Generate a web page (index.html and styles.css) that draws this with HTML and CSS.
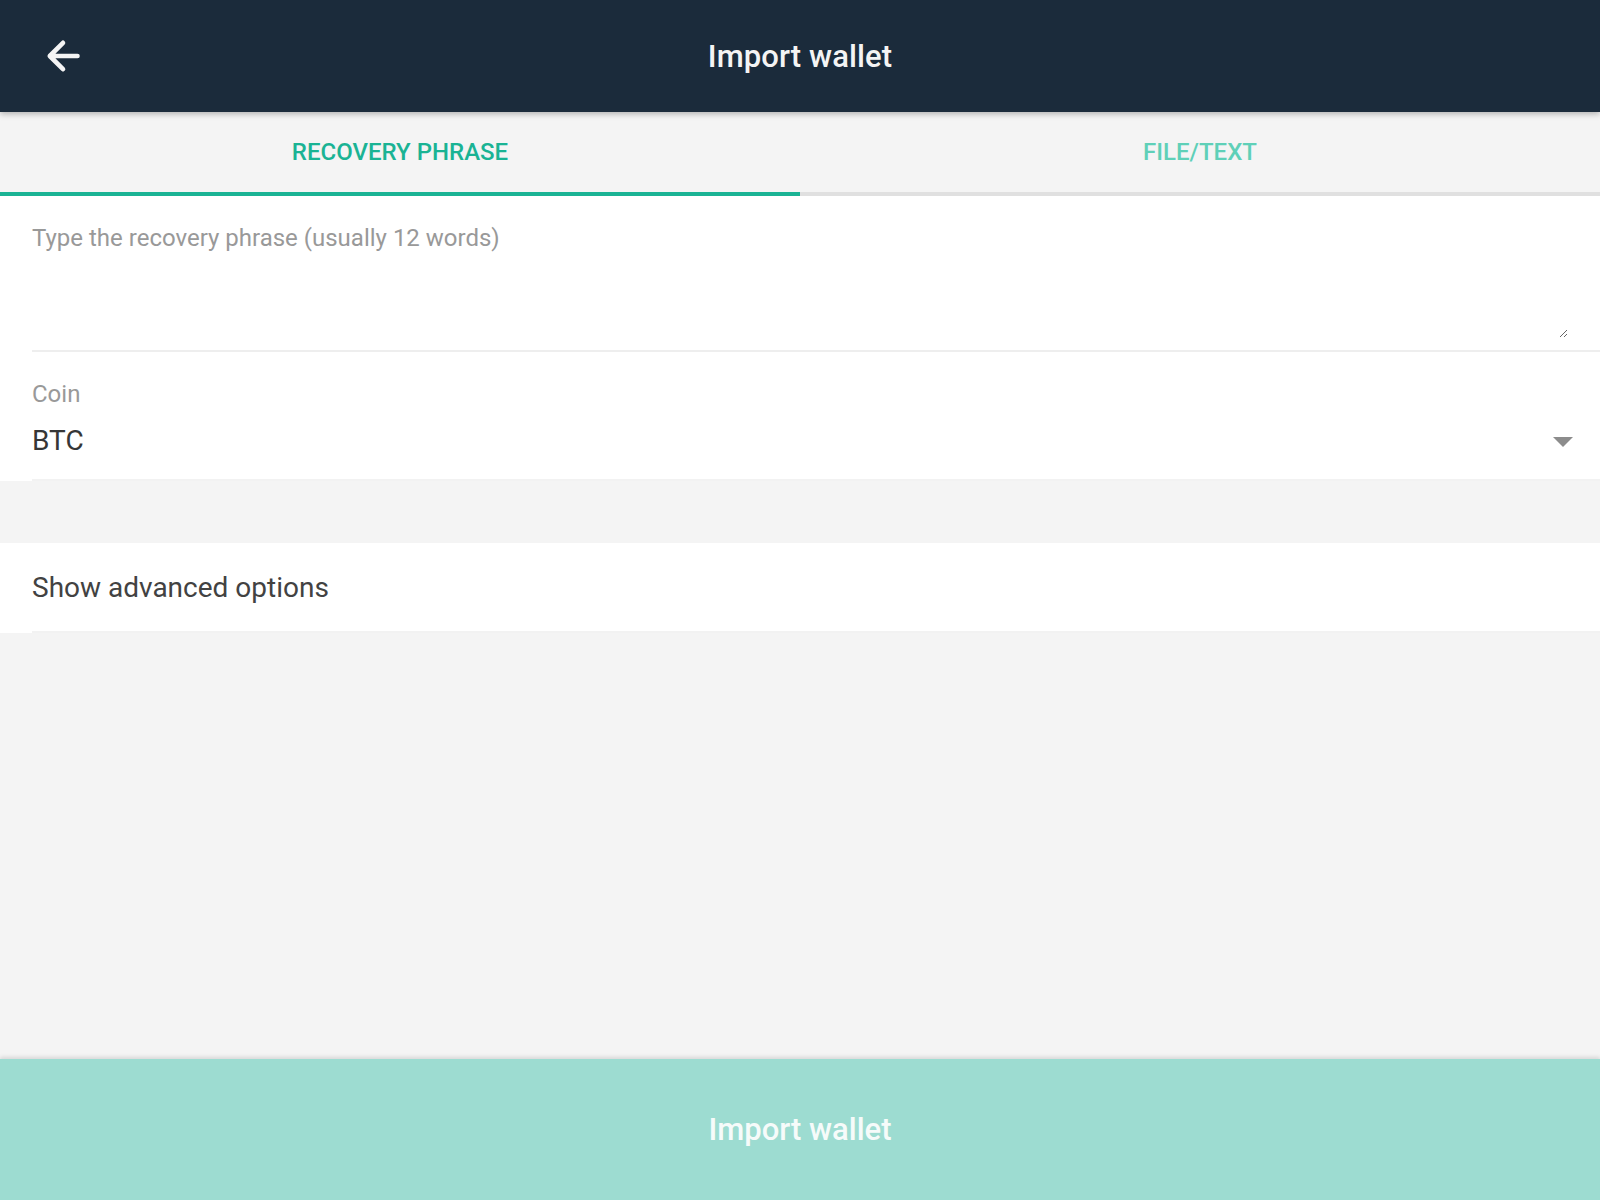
FILE: index.html
```html
<!DOCTYPE html>
<html lang="en">
<head>
<meta charset="utf-8">
<title>Import wallet</title>
<link rel="stylesheet" href="styles.css">
</head>
<body>
<div class="app">
  <header class="topbar">
    <div class="topbar-left">
      <button class="back" aria-label="Back">
        <svg width="40" height="40" viewBox="0 0 40 40" fill="none" stroke="#f4f4f4" stroke-width="4.6" stroke-linecap="round" stroke-linejoin="round"><path d="M33.5 20 H5.8 M19 6.8 L5.8 20 L19 33.2"/></svg>
      </button>
    </div>
    <h1 class="title">Import wallet</h1>
    <div class="topbar-right"></div>
  </header>

  <nav class="tabs">
    <div class="tab tab-active">RECOVERY PHRASE</div>
    <div class="tab">FILE/TEXT</div>
  </nav>

  <section class="form">
    <div class="field field-phrase">
      <textarea class="phrase" placeholder="Type the recovery phrase (usually 12 words)"></textarea>
    </div>
    <div class="field field-coin">
      <div class="coin-label">Coin</div>
      <div class="coin-select">
        <span class="coin-value">BTC</span>
        <svg class="caret" width="20" height="10" viewBox="0 0 20 10"><path d="M0 0 H20 L10 10 Z" fill="#8c8c8c"/></svg>
      </div>
    </div>
  </section>

  <section class="advanced">
    <div class="advanced-row">Show advanced options</div>
  </section>

  <div class="spacer"></div>

  <button class="import">Import wallet</button>
</div>
</body>
</html>
```

FILE: styles.css
```css
html, body {
  margin: 0;
  padding: 0;
}
body {
  background: #f4f4f4;
  font-family: Roboto, "Liberation Sans", sans-serif;
}
.app {
  height: 1200px;
  display: flex;
  flex-direction: column;
  background: #f4f4f4;
}
.topbar {
  height: 112px;
  flex: 0 0 112px;
  background: #1b2b3b;
  display: grid;
  grid-template-columns: 1fr auto 1fr;
  align-items: center;
  box-shadow: 0 2px 6px rgba(0,0,0,0.28);
  position: relative;
  z-index: 2;
}
.topbar-left {
  padding-left: 44px;
  display: flex;
  align-items: center;
}
.back {
  background: none;
  border: 0;
  padding: 0;
  margin: 0;
  width: 40px;
  height: 40px;
  display: block;
  cursor: pointer;
}
.back svg { display: block; }
.title {
  margin: 0;
  color: #f4f4f4;
  font-size: 31px;
  font-weight: 500;
  letter-spacing: 0.1px;
}
.tabs {
  display: flex;
  flex: 0 0 84px;
  background: #f4f4f4;
}
.tab {
  flex: 1;
  display: flex;
  align-items: center;
  justify-content: center;
  border-bottom: 4px solid #e0e0e0;
  color: #5fd0b8;
  font-size: 24px;
  font-weight: 500;
  box-sizing: border-box;
  height: 84px;
}
.tab-active {
  color: #1ab394;
  border-bottom-color: #1ab394;
}
.form {
  background: #fff;
}
.field {
  margin-left: 32px;
}
.field-phrase {
  padding-top: 28px;
  padding-bottom: 12px;
  border-bottom: 2px solid #eeeeee;
}
.phrase {
  display: block;
  box-sizing: border-box;
  width: calc(100% - 32px);
  height: 114px;
  margin: 0;
  padding: 0;
  border: 0;
  outline: none;
  resize: vertical;
  font-family: Roboto, "Liberation Sans", sans-serif;
  font-size: 24px;
  line-height: 28px;
  color: #333;
  background: #fff;
}
.phrase::placeholder {
  color: #999;
}
.field-coin {
  padding-top: 28px;
  padding-bottom: 22px;
  border-bottom: 2px solid #f2f2f2;
}
.coin-label {
  color: #999;
  font-size: 24px;
  line-height: 28px;
}
.coin-select {
  margin-top: 17px;
  display: flex;
  align-items: center;
  justify-content: space-between;
  padding-right: 27px;
  height: 32px;
}
.coin-value {
  color: #363636;
  font-size: 28px;
  line-height: 32px;
}
.caret {
  display: block;
  margin-top: 2px;
}
.advanced {
  margin-top: 62px;
  background: #fff;
}
.advanced-row {
  margin-left: 32px;
  height: 88px;
  display: flex;
  align-items: center;
  border-bottom: 2px solid #f2f2f2;
  color: #424242;
  font-size: 28px;
}
.spacer {
  flex: 1;
}
.import {
  flex: 0 0 141px;
  height: 141px;
  border: 0;
  margin: 0;
  background: #9ddcd1;
  color: #f6fbfa;
  font-family: Roboto, "Liberation Sans", sans-serif;
  font-size: 31px;
  font-weight: 500;
  box-shadow: 0 -2px 4px rgba(0,0,0,0.12);
  position: relative;
  z-index: 1;
}
```
